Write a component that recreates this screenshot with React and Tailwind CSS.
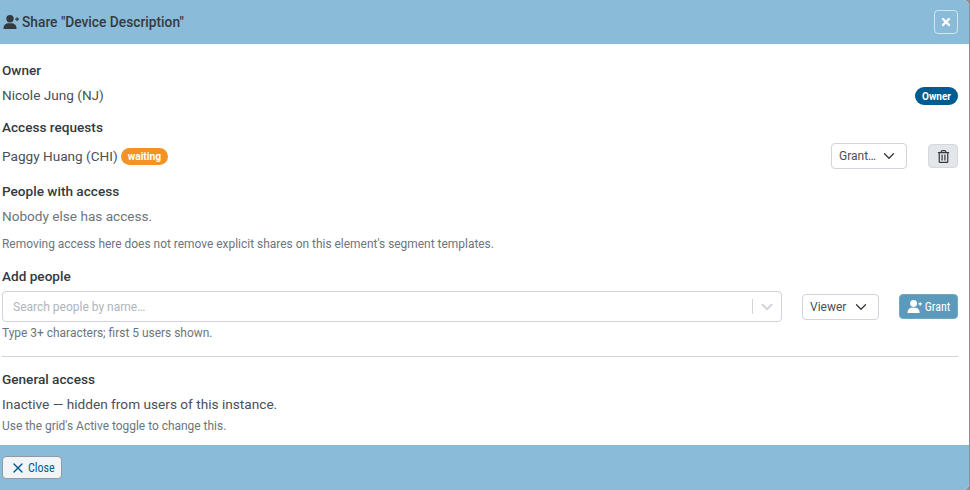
import React from "react";
import { FaTimes, FaRegTrashAlt } from "react-icons/fa";
import { ChevronDown, X } from "lucide-react";

function UserPlus({ className }) {
  return (
    <svg viewBox="0 0 16 14" className={className} fill="currentColor" aria-hidden="true">
      <circle cx="7" cy="3.8" r="3.7" />
      <path d="M0.5 14C0.3 10.5 2.6 8.3 5.2 8.3H8.8C11.4 8.3 13.7 10.5 13.5 14Z" />
      <path d="M12.2 4.2H16M14.1 2.3V6.1" stroke="currentColor" strokeWidth="1.2" fill="none" />
    </svg>
  );
}

function Select({ label, w }) {
  return (
    <div className={`flex h-[26px] items-center justify-between rounded border border-[#ced4da] bg-white pl-[7px] pr-[8px] text-[12px] text-[#495057] ${w}`}>
      <span>{label}</span>
      <ChevronDown size={18} strokeWidth={1.75} className="text-[#343a40]" />
    </div>
  );
}

function Heading({ children, className = "" }) {
  return <div className={`text-[13.6px] leading-[20px] font-medium text-[#343a40] ${className}`}>{children}</div>;
}

export default function App() {
  return (
    <div className="flex h-[490px] w-[970px] bg-[#8f8f8f] font-['Roboto',sans-serif]">
      <div className="flex h-[490px] w-[968.5px] flex-col overflow-hidden rounded-tr-md rounded-br-md bg-white">
        <header className="flex h-[44px] shrink-0 items-center justify-between bg-[#8abcd9] pl-[3px] pr-[10.5px]">
          <div className="flex items-center gap-[3px] text-[13.75px] leading-[20px] font-medium text-[#343a40]">
            <UserPlus className="h-[14px] w-[16px]" />
            <span className="-mt-[1px]">Share "Device Description"</span>
          </div>
          <button className="flex h-[24px] w-[24px] items-center justify-center rounded border border-[#d5e5ef] text-white">
            <FaTimes size={12} />
          </button>
        </header>

        <main className="flex flex-1 flex-col pl-[2px] pr-[10.5px]">
          <Heading className="mt-[16px]">Owner</Heading>
          <div className="mt-[5px] flex h-[20px] items-center justify-between text-[13.6px] text-[#495057]">
            <span>Nicole Jung (NJ)</span>
            <span className="mt-[2px] flex h-[18px] items-center rounded-full bg-[#005b8f] px-[7px] text-[10px] font-bold text-white">Owner</span>
          </div>
          <Heading className="mt-[12px]">Access requests</Heading>
          <div className="mt-[5px] flex h-[28px] items-center justify-between text-[13.6px] text-[#495057]">
            <div className="flex items-center gap-[3px]">
              <span>Paggy Huang (CHI)</span>
              <span className="mt-[1px] flex h-[17px] items-center rounded-full bg-[#f39325] px-[7px] text-[10.2px] font-bold text-white">waiting</span>
            </div>
            <div className="flex items-center gap-[21px]">
              <Select label="Grant…" w="w-[76px]" />
              <button className="flex h-[24px] w-[30px] items-center justify-center rounded border border-[#d5d9dd] bg-[#e4e7ea] text-[#343a40]">
                <FaRegTrashAlt size={13} />
              </button>
            </div>
          </div>
          <Heading className="mt-[11px]">People with access</Heading>
          <div className="mt-[5px] text-[13.6px] leading-[20px] text-[#6c757d]">Nobody else has access.</div>
          <div className="mt-[10px] text-[11.95px] leading-[16px] text-[#6c757d]">Removing access here does not remove explicit shares on this element's segment templates.</div>
          <Heading className="mt-[14px]">Add people</Heading>
          <div className="mt-[5px] flex items-center">
            <div className="flex h-[31px] w-[780px] items-center rounded border border-[#ced4da] bg-white pl-[10px] text-[12px] text-[#adb5bd]">
              <span className="flex-1">Search people by name…</span>
              <span className="h-[15px] w-px bg-[#ced4da]" />
              <ChevronDown size={18} strokeWidth={2.5} className="mx-[5px] text-[#ced4da]" />
            </div>
            <div className="ml-[20px]"><Select label="Viewer" w="w-[77px]" /></div>
            <button className="ml-[20px] flex h-[25px] w-[59px] items-center justify-center gap-[3px] rounded border border-[#6fa8c5] bg-[#5b9aba] text-[12px] text-white [font-stretch:87%]">
              <UserPlus className="h-[13px] w-[15px]" />
              <span>Grant</span>
            </button>
          </div>
          <div className="mt-[3px] text-[11.95px] leading-[16px] text-[#6c757d]">Type 3+ characters; first 5 users shown.</div>
          <hr className="mt-[15px] border-t border-[#ced4da]" />
          <Heading className="mt-[12px]">General access</Heading>
          <div className="mt-[5px] text-[13.65px] leading-[20px] text-[#495057]">Inactive — hidden from users of this instance.</div>
          <div className="mt-[4px] text-[11.95px] leading-[16px] text-[#6c757d]">Use the grid's Active toggle to change this.</div>
        </main>

        <footer className="flex h-[45px] shrink-0 items-center bg-[#8abcd9] pl-[2px]">
          <button className="flex h-[23px] w-[60px] items-center gap-[2px] rounded border border-[#8c9ba5] bg-[#f1f5f8] pl-[7px] text-[12px] text-[#005b8f] [font-stretch:87%]">
            <X size={16} strokeWidth={2} />
            <span>Close</span>
          </button>
        </footer>
      </div>
    </div>
  );
}
